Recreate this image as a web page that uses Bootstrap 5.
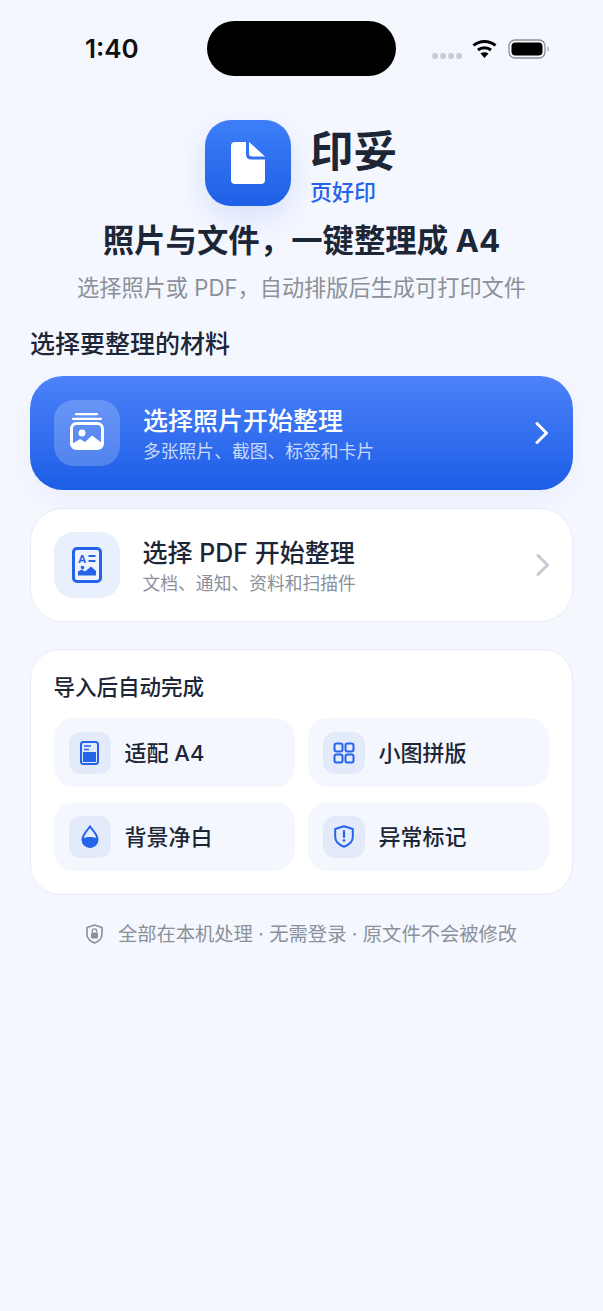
<!DOCTYPE html>
<html lang="zh-CN">
<head>
    <meta charset="UTF-8">
    <meta name="viewport" content="width=device-width, initial-scale=1.0">
    <link href="https://cdn.jsdelivr.net/npm/bootstrap@5.3.3/dist/css/bootstrap.min.css" rel="stylesheet">
    <title>印妥</title>
    <style>
        body { background: #f5f7ff; font-family: "Inter", "Noto Sans CJK SC", "Noto Sans", sans-serif; color: #1c2636; min-height: 1311px; }
        .status-row { height: 120px; padding: 21px 0 0 85px; }
        .status-time { flex: none; width: 122px; height: 55px; font: 600 26px/56px "Inter", sans-serif; color: #111; }
        .island { flex: none; width: 189px; height: 55px; background: #000; border-radius: 28px; }
        .status-icons { flex: none; margin-left: 36px; height: 55px; }
        .sig-dots { gap: 2px; margin-top: 14px; margin-right: 10px; }
        .sig-dots i { width: 6px; height: 6px; border-radius: 50%; background: #c9cacf; display: block; }
        .wifi-ico { margin-right: 11px; }
        .brand-icon { flex: none; width: 86px; height: 86px; border-radius: 26px; background: linear-gradient(180deg, #3d7ef8, #1f5fe6); box-shadow: 0 12px 30px rgba(37, 99, 235, .14); }
        .brand-text { margin: 0 1px 0 19px; }
        .brand-name { font-size: 43.5px; line-height: 52px; font-weight: 700; margin-top: 5px; }
        .brand-sub { font-size: 22px; line-height: 28px; color: #2563eb; font-weight: 500; margin-top: 1px; }
        .hero-title { font-size: 31.4px; line-height: 40px; font-weight: 700; margin: 15px 0 0; }
        .hero-sub { font-size: 22.2px; line-height: 32px; color: #8b9098; margin: 11px 0 0; }
        .page-body { padding: 0 30px; }
        .section-label { font-size: 25px; line-height: 36px; font-weight: 500; margin: 22px 0 14px; }
        .pick-card { height: 114px; border-radius: 33px; padding: 0 24px; border: 0; }
        .pick-blue { background: linear-gradient(180deg, #4c82f9, #1c5de6); color: #fff; box-shadow: 0 10px 24px rgba(37, 99, 235, .05); }
        .pick-white { background: #fff; border: 1.5px solid #e9ecf4; margin-top: 18px; padding: 0 22.5px; }
        .pick-ico { width: 66px; height: 66px; border-radius: 20px; flex: none; margin-right: 23px; }
        .pick-blue .pick-ico { background: rgba(255, 255, 255, .2); }
        .pick-white .pick-ico { background: #e8effd; }
        .pick-copy { padding-top: 2px; }
        .pick-title { font-size: 25px; line-height: 34px; font-weight: 500; }
        .pick-sub { font-size: 17.8px; line-height: 24px; margin-top: 2px; }
        .pick-blue .pick-sub { color: #c7d9fc; }
        .pick-white .pick-sub { color: #8b9098; }
        .auto-card { margin-top: 27px; height: 246px; border-radius: 30px; background: #fff; border: 1.5px solid #e9ecf4; padding: 22px 22.5px 0; }
        .auto-title { font-size: 21.5px; line-height: 30px; font-weight: 500; margin-bottom: 16px; }
        .tile-grid { display: grid; grid-template-columns: 241px 241px; gap: 15px 13px; }
        .tile { height: 69px; border-radius: 20px; background: #f5f7fe; padding: 0 15px; }
        .tile-ico { width: 42px; height: 42px; border-radius: 12px; background: #e3ebfb; flex: none; margin-right: 14px; }
        .tile-text { font-size: 22px; line-height: 30px; font-weight: 500; }
        .safe-note { margin-top: 24px; font-size: 19.3px; line-height: 30px; color: #8b9098; gap: 15px; }
    </style>
</head>
<body>
    <div class="status-row d-flex">
        <div class="status-time">1:40</div>
        <div class="island"></div>
        <div class="status-icons d-flex align-items-center">
            <div class="sig-dots d-flex">
                <i></i><i></i><i></i><i></i>
            </div>
            <svg class="wifi-ico" width="25" height="19" viewBox="0 0 25 19">
                <path d="M1.500 6.500C7.500 1 17.500 1 23.500 6.500" fill="none" stroke="#000" stroke-width="3"/>
                <path d="M6 11c3.700-3 9.300-3 13 0" fill="none" stroke="#000" stroke-width="3"/>
                <path d="M8.500 14.500c2.500-1.800 5.500-1.800 8 0L12.500 19Z" fill="#000"/>
            </svg>
            <svg width="42" height="20" viewBox="0 0 42 20">
                <rect x="1" y="1" width="36" height="18" rx="6" fill="none" stroke="#8e8e92" stroke-width="1.300"/>
                <rect x="3.500" y="3.500" width="31" height="13" rx="4" fill="#000"/>
                <path d="M39.500 7.500c1.500.5 1.500 4.500 0 5Z" fill="#8e8e92"/>
            </svg>
        </div>
    </div>

    <div class="d-flex justify-content-center">
        <div class="brand-icon d-flex align-items-center justify-content-center">
            <svg width="34" height="42" viewBox="0 0 34 42">
                <path d="M4 0H15V12Q15 17.500 20 17.500H34V38a4 4 0 0 1-4 4H4a4 4 0 0 1-4-4V4a4 4 0 0 1 4-4Z" fill="#fff"/>
                <path d="M18 0 34 14.500H21Q18 14.500 18 11.500Z" fill="#fff"/>
            </svg>
        </div>
        <div class="brand-text">
            <div class="brand-name">印妥</div>
            <div class="brand-sub">页好印</div>
        </div>
    </div>

    <h1 class="hero-title text-center">照片与文件，一键整理成 A4</h1>
    <p class="hero-sub text-center">选择照片或 PDF，自动排版后生成可打印文件</p>

    <div class="page-body">
        <div class="section-label">选择要整理的材料</div>

        <div class="card pick-card pick-blue flex-row align-items-center">
            <div class="pick-ico d-flex align-items-center justify-content-center">
                <svg width="36" height="40" viewBox="0 0 36 40">
                    <path d="M7 1.200H28M4 5.800H32" stroke="#fff" stroke-width="2.300" stroke-linecap="round"/>
                    <rect x="2.500" y="10.500" width="31" height="25" rx="5" fill="none" stroke="#fff" stroke-width="3"/>
                    <circle cx="13" cy="20" r="3.500" fill="#fff"/>
                    <path d="M3 34V31L11 26 16 29 23 22.500 33 30V34Q33 36 31 36H5Q3 36 3 34Z" fill="#fff"/>
                </svg>
            </div>
            <div class="pick-copy flex-grow-1">
                <div class="pick-title">选择照片开始整理</div>
                <div class="pick-sub">多张照片、截图、标签和卡片</div>
            </div>
            <svg width="14" height="24" viewBox="0 0 14 24"><path d="M2 2.500 11.500 12 2 21.500" fill="none" stroke="#fff" stroke-width="3" stroke-linecap="round" stroke-linejoin="round"/></svg>
        </div>

        <div class="card pick-card pick-white flex-row align-items-center">
            <div class="pick-ico d-flex align-items-center justify-content-center">
                <svg width="30" height="36" viewBox="0 0 30 36">
                    <rect x="1.500" y="1.500" width="27" height="33" rx="3.500" fill="#eef3fe" stroke="#2563eb" stroke-width="3"/>
                    <text x="6" y="15.500" font-family="Liberation Sans, sans-serif" font-size="11.500" font-weight="700" fill="#2563eb">A</text>
                    <path d="M16.500 9H23.500M16.500 14H23.500" stroke="#2563eb" stroke-width="2.200"/>
                    <circle cx="10.500" cy="20.500" r="1.800" fill="#2563eb"/>
                    <path d="M6 28.500V24.500L10 22.500 13 24.500 19 19.500 24 24V28.500Z" fill="#2563eb"/>
                </svg>
            </div>
            <div class="pick-copy flex-grow-1">
                <div class="pick-title">选择 PDF 开始整理</div>
                <div class="pick-sub">文档、通知、资料和扫描件</div>
            </div>
            <svg width="14" height="24" viewBox="0 0 14 24"><path d="M2 2.500 11.500 12 2 21.500" fill="none" stroke="#c6cad2" stroke-width="3" stroke-linecap="round" stroke-linejoin="round"/></svg>
        </div>

        <div class="auto-card">
            <div class="auto-title">导入后自动完成</div>
            <div class="tile-grid">
                <div class="tile d-flex align-items-center">
                    <div class="tile-ico d-flex align-items-center justify-content-center">
                        <svg width="19" height="24" viewBox="0 0 19 24">
                            <rect x="1" y="1" width="17" height="22" rx="2.500" fill="none" stroke="#2563eb" stroke-width="2"/>
                            <path d="M4 5H11M4 8.500H9" stroke="#2563eb" stroke-width="1.600"/>
                            <rect x="3" y="11" width="13" height="10" fill="#2563eb"/>
                        </svg>
                    </div>
                    <div class="tile-text">适配 A4</div>
                </div>
                <div class="tile d-flex align-items-center">
                    <div class="tile-ico d-flex align-items-center justify-content-center">
                        <svg width="22" height="22" viewBox="0 0 22 22" fill="none" stroke="#2563eb" stroke-width="2">
                            <rect x="1.500" y="1.500" width="8" height="8" rx="2"/>
                            <rect x="12.500" y="1.500" width="8" height="8" rx="2"/>
                            <rect x="1.500" y="12.500" width="8" height="8" rx="2"/>
                            <rect x="12.500" y="12.500" width="8" height="8" rx="2"/>
                        </svg>
                    </div>
                    <div class="tile-text">小图拼版</div>
                </div>
                <div class="tile d-flex align-items-center">
                    <div class="tile-ico d-flex align-items-center justify-content-center">
                        <svg width="18" height="23" viewBox="0 0 18 23">
                            <path d="M9 1.500C6 6 1.500 9.500 1.500 14.500a7.500 7.500 0 0 0 15 0C16.500 9.500 12 6 9 1.500Z" fill="none" stroke="#2563eb" stroke-width="2"/>
                            <path d="M1.500 13.500C6 11.500 12 11.500 16.500 13.500V15a7.500 7.500 0 0 1-15 0Z" fill="#2563eb"/>
                        </svg>
                    </div>
                    <div class="tile-text">背景净白</div>
                </div>
                <div class="tile d-flex align-items-center">
                    <div class="tile-ico d-flex align-items-center justify-content-center">
                        <svg width="20" height="23" viewBox="0 0 20 23">
                            <path d="M10 1.200 18.800 4V12C18.800 16.500 15 19.800 10 21.800 5 19.800 1.200 16.500 1.200 12V4Z" fill="none" stroke="#2563eb" stroke-width="2" stroke-linejoin="round"/>
                            <path d="M10 6V12" stroke="#2563eb" stroke-width="2.200" stroke-linecap="round"/>
                            <circle cx="10" cy="15.500" r="1.300" fill="#2563eb"/>
                        </svg>
                    </div>
                    <div class="tile-text">异常标记</div>
                </div>
            </div>
        </div>

        <div class="safe-note d-flex justify-content-center align-items-center">
            <svg width="17" height="20" viewBox="0 0 17 20">
                <path d="M8.500 1 16 3.500V10C16 14.500 12.500 17.500 8.500 19 4.500 17.500 1 14.500 1 10V3.500Z" fill="none" stroke="#8b9098" stroke-width="1.600" stroke-linejoin="round"/>
                <rect x="5" y="8.500" width="7" height="6" rx="1" fill="#8b9098"/>
                <path d="M6.300 8.500V7a2.200 2.200 0 0 1 4.400 0V8.500" fill="none" stroke="#8b9098" stroke-width="1.200"/>
            </svg>
            <span>全部在本机处理 · 无需登录 · 原文件不会被修改</span>
        </div>
    </div>

    <script src="https://cdn.jsdelivr.net/npm/bootstrap@5.3.3/dist/js/bootstrap.bundle.min.js"></script>
</body>
</html>
